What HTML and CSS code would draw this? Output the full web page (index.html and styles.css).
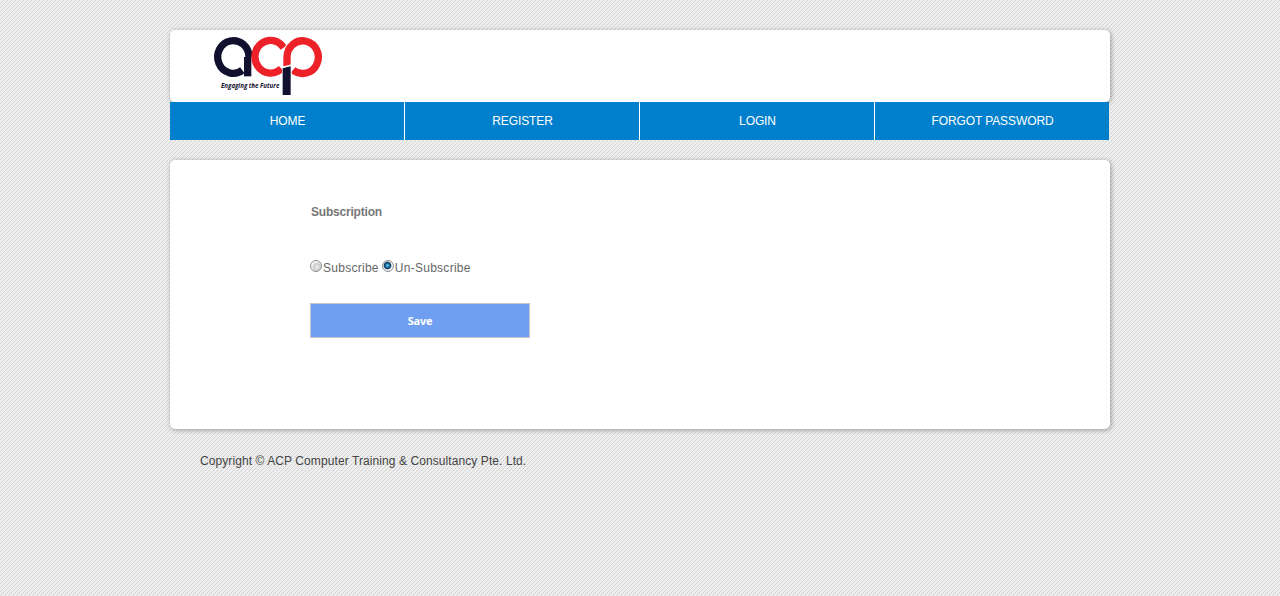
FILE: index.html
```html
<!DOCTYPE html>
<html lang="en">
<head>
<meta charset="utf-8">
<title>Subscription</title>
<link rel="stylesheet" href="styles.css">
</head>
<body>
<div class="page">
  <header class="header">
    <svg class="logo" viewBox="0 0 390 216" role="img" aria-label="ACP Engaging the Future">
      <g fill="none" stroke-width="22">
        <path stroke="#11112f" d="M112 121A47 49 0 1 1 132 81"/>
        <path stroke="#11112f" stroke-width="22" d="M128 81V139"/>
        <path stroke="#ed2228" d="M236 53A47 49 0 1 0 229 116"/>
        <path stroke="#fff" stroke-width="28" d="M246 108V81A47 49 0 1 1 266 121"/>
        <path stroke="#ed2228" d="M246 108V81A47 49 0 1 1 264 120"/>
      </g>
      <path fill="#fff" d="M231 110L260 103V142H231Z"/>
      <path fill="#11112f" d="M233 115L257 109V195H233Z"/>
      <text class="tagline" x="48" y="173" textLength="175" lengthAdjust="spacingAndGlyphs">Engaging the Future</text>
    </svg>
  </header>
  <nav class="nav">
    <a class="nav-item">HOME</a>
    <a class="nav-item">REGISTER</a>
    <a class="nav-item">LOGIN</a>
    <a class="nav-item">FORGOT PASSWORD</a>
  </nav>
  <main class="panel">
    <h1 class="title">Subscription</h1>
    <div class="options">
      <label class="option"><span class="radio"></span><span>Subscribe</span></label>
      <label class="option"><span class="radio checked"></span><span>Un-Subscribe</span></label>
    </div>
    <button class="save">Save</button>
  </main>
  <footer class="footer">Copyright © ACP Computer Training &amp; Consultancy Pte. Ltd.</footer>
</div>
</body>
</html>
```
FILE: styles.css
```css
/* four single-pixel layers step left per row to form 4px diagonal stripes */
body {
  margin: 0;
  min-height: 596px;
  background-color: #eee;
  background-image:
    conic-gradient(from 0deg at 3px 1px, #cdcdcd 90deg, transparent 0),
    conic-gradient(from 0deg at 3px 1px, #dcdcdc 90deg, transparent 0),
    conic-gradient(from 0deg at 3px 1px, #cdcdcd 90deg, transparent 0),
    conic-gradient(from 0deg at 3px 1px, #dcdcdc 90deg, transparent 0);
  background-size: 4px 4px;
  background-position: 0 0, -1px 1px, -2px 2px, -3px 3px;
  font: 12px "Liberation Sans", Arial, sans-serif;
  color: #444;
}
.page { width: 940px; margin: 0 auto; padding-top: 30px; }
.header, .panel {
  background: #fff;
  border-radius: 5px;
  box-shadow: 1px 1px 5px rgba(0, 0, 0, .35);
}
.header { height: 72px; }
.logo { display: block; width: 130px; height: 72px; margin-left: 35px; }
.tagline { font: italic bold 19px "Open Sans", sans-serif; fill: #11112f; }
.nav {
  position: relative;
  display: grid;
  grid-template-columns: repeat(4, 234px);
  column-gap: 1px;
  width: 939px;
  height: 38px;
  background: #fff;
}
.nav-item {
  padding-left: 1px;
  background: #007fcc;
  color: #fff;
  line-height: 38px;
  letter-spacing: -.1px;
  text-align: center;
}
.panel { box-sizing: border-box; height: 269px; margin-top: 20px; padding: 44px 140px 0; }
.title { margin: 0 0 0 1px; font-size: 12px; line-height: 16px; letter-spacing: -.2px; color: #777; }
.options { display: flex; gap: 3px; margin-top: 40px; line-height: 16px; letter-spacing: .27px; color: #666; }
.option { display: flex; }
.radio {
  box-sizing: border-box;
  width: 12px;
  height: 12px;
  margin-right: 1px;
  border: 1px solid #8c8f92;
  border-radius: 50%;
  background: radial-gradient(circle at 60% 60%, #eee 0, #ccc 40%, #f6f6f6 60%);
}
.checked { background: radial-gradient(circle at 45% 45%, #7ad8f5 0, #1c76a8 1.8px, #103a5c 3.3px, #f4f4f4 4.3px); }
.save {
  display: block;
  width: 220px;
  height: 35px;
  margin-top: 27px;
  padding: 0;
  border: 1px solid #c6c6c6;
  background: #6f9ff1;
  color: #fff;
  font: bold 11px "Open Sans", sans-serif;
  letter-spacing: -.2px;
}
.footer { margin: 24px 0 0 30px; line-height: 16px; letter-spacing: .085px; }
```
